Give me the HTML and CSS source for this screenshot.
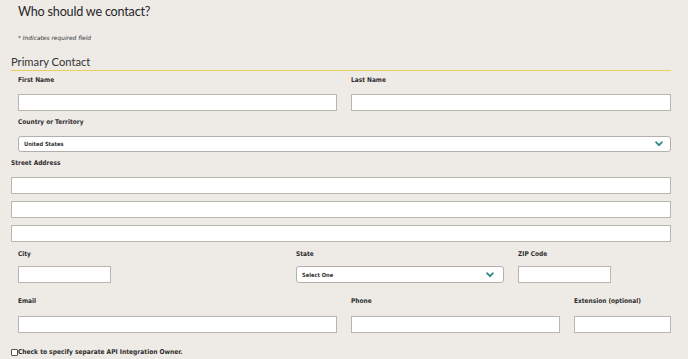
FILE: index.html
```html
<!DOCTYPE html>
<html lang="en">
<head>
<meta charset="utf-8">
<title>Who should we contact?</title>
<link rel="stylesheet" href="styles.css">
</head>
<body>
<div class="page">
  <h1 class="title">Who should we contact?</h1>
  <p class="note">* Indicates required field</p>
  <h2 class="section">Primary Contact</h2>

  <div class="row row-names">
    <div class="field">
      <label class="lbl">First Name</label>
      <input class="inp" type="text">
    </div>
    <div class="field">
      <label class="lbl">Last Name</label>
      <input class="inp" type="text">
    </div>
  </div>

  <div class="field country">
    <label class="lbl">Country or Territory</label>
    <div class="select">
      <span class="sel-text">United States</span>
      <svg class="chev" width="8" height="6" viewBox="0 0 8 6"><path d="M1.2 1.3 L4 4.2 L6.8 1.3" fill="none" stroke="#2b8c8a" stroke-width="1.9" stroke-linecap="round" stroke-linejoin="round"/></svg>
    </div>
  </div>

  <div class="street">
    <label class="lbl">Street Address</label>
    <input class="inp" type="text">
    <input class="inp" type="text">
    <input class="inp" type="text">
  </div>

  <div class="row row-city">
    <div class="field f-city">
      <label class="lbl">City</label>
      <input class="inp" type="text">
    </div>
    <div class="field f-state">
      <label class="lbl">State</label>
      <div class="select">
        <span class="sel-text">Select One</span>
        <svg class="chev" width="8" height="6" viewBox="0 0 8 6"><path d="M1.2 1.3 L4 4.2 L6.8 1.3" fill="none" stroke="#2b8c8a" stroke-width="1.9" stroke-linecap="round" stroke-linejoin="round"/></svg>
      </div>
    </div>
    <div class="field f-zip">
      <label class="lbl">ZIP Code</label>
      <input class="inp" type="text">
    </div>
  </div>

  <div class="row row-email">
    <div class="field">
      <label class="lbl">Email</label>
      <input class="inp" type="text">
    </div>
    <div class="field">
      <label class="lbl">Phone</label>
      <input class="inp" type="text">
    </div>
    <div class="field">
      <label class="lbl">Extension (optional)</label>
      <input class="inp" type="text">
    </div>
  </div>

  <label class="check"><span class="box"></span>Check to specify separate API Integration Owner.</label>
</div>
</body>
</html>
```
FILE: styles.css
```css
html, body {
  margin: 0;
  padding: 0;
  background: #eeebe7;
}
body {
  font-family: "DejaVu Sans", Verdana, sans-serif;
  color: #2e2e2e;
}
.page {
  width: 660px;
  padding: 0 0 0 11px;
  display: flex;
  flex-direction: column;
}
.title {
  font-family: Lato, "Open Sans", sans-serif;
  font-weight: 400;
  font-size: 12.6px;
  letter-spacing: -0.2px;
  line-height: 20px;
  margin: 2px 0 0 7px;
  color: #262626;
}
.note {
  font-style: italic;
  font-size: 5.9px;
  line-height: 8px;
  margin: 12px 0 0 7px;
  color: #333;
}
.section {
  font-family: Lato, "Open Sans", sans-serif;
  font-weight: 400;
  font-size: 11.2px;
  line-height: 14px;
  margin: 13px 0 0 0;
  padding-bottom: 1px;
  border-bottom: 1px solid #efcf5c;
  color: #333;
}
.lbl {
  display: block;
  font-weight: 700;
  font-size: 6.5px;
  line-height: 10px;
  height: 10px;
  font-stretch: semi-condensed;
  color: #2e2e2e;
  white-space: nowrap;
}
.inp {
  display: block;
  box-sizing: border-box;
  margin: 0;
  padding: 0;
  height: 17px;
  width: 100%;
  background: #fff;
  border: 1px solid #b9b6b2;
  border-radius: 0;
  outline: none;
}
.field {
  display: flex;
  flex-direction: column;
}
.row {
  display: grid;
  margin-left: 7px;
}
.row-names {
  grid-template-columns: 319px 320px;
  column-gap: 14px;
  margin-top: 4px;
}
.row-names .lbl { margin-bottom: 9px; }

.country {
  margin: 6px 0 0 7px;
}
.country .lbl { margin-bottom: 9px; }
.select {
  box-sizing: border-box;
  height: 16px;
  background: #fff;
  border: 1px solid #b3b0ac;
  border-radius: 3px;
  display: flex;
  align-items: center;
  justify-content: space-between;
  padding: 0 7px 0 5px;
}
.sel-text {
  font-weight: 700;
  font-size: 5.7px;
  font-stretch: semi-condensed;
  color: #333;
  white-space: nowrap;
}
.chev { display: block; flex: none; }

.street {
  display: flex;
  flex-direction: column;
  gap: 7px;
  margin-top: 6px;
}
.street .lbl { margin-bottom: 2px; }

.row-city {
  display: flex;
  margin-top: 7px;
}
.f-city { width: 93px; }
.f-state { width: 208px; margin-left: 185px; }
.f-zip { width: 93px; margin-left: 14px; }
.row-city .lbl { margin-bottom: 7px; }
.row-city .select { height: 17px; padding-right: 9px; }

.row-email {
  grid-template-columns: 319px 209px 97px;
  column-gap: 14px;
  margin-top: 13px;
}
.row-email .lbl { margin-bottom: 10px; }

.check {
  display: flex;
  align-items: center;
  margin-top: 14px;
  font-weight: 700;
  font-size: 6.6px;
  font-stretch: semi-condensed;
  line-height: 10px;
  color: #2e2e2e;
}
.box {
  display: inline-block;
  box-sizing: border-box;
  width: 7px;
  height: 7px;
  border: 1px solid #555;
  border-radius: 1px;
  background: #fff;
}
```
